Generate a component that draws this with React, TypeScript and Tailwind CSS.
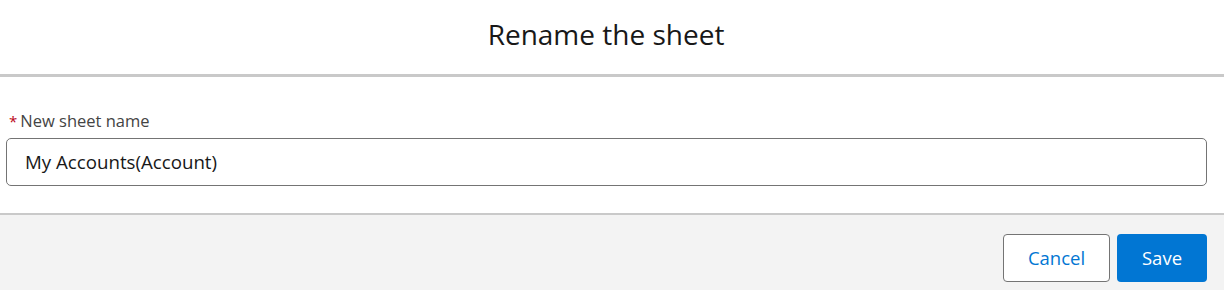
export default function App() {
  return (
    <div className="w-[1224px] h-[290px] bg-white flex flex-col text-[#181818]" style={{ fontFamily: '"Open Sans", "Noto Sans", sans-serif' }}>
      <header className="h-[77px] shrink-0 border-b-[3px] border-[#c9c9c9] flex items-center justify-center pb-[6px] pr-[12px]">
        <h1 className="text-[28px] font-normal text-[#181818]">Rename the sheet</h1>
      </header>
      <div className="h-[138px] shrink-0 border-b-[2px] border-[#c9c9c9] pl-[6px] pr-[17px] pt-[33px]">
        <label className="flex items-center text-[16.5px] text-[#444444] pl-[3px] leading-[22px]">
          <span className="text-[#ba0517] text-[15px] mr-[3px]">*</span>New sheet name
        </label>
        <div className="mt-[6px] h-[48px] border border-[#747474] rounded-[5px] flex items-center pl-[18px] text-[18.7px] text-[#181818]">
          My Accounts(Account)
        </div>
      </div>
      <footer className="flex-1 bg-[#f3f3f3] flex justify-end items-start pt-[19px] pr-[17px] gap-[7px]">
        <button className="h-[48px] w-[107px] rounded-[4px] border border-[#747474] bg-white text-[#0176d3] text-[18.5px]">Cancel</button>
        <button className="h-[48px] w-[90px] rounded-[4px] bg-[#0176d3] text-white text-[18.5px]">Save</button>
      </footer>
    </div>
  )
}
